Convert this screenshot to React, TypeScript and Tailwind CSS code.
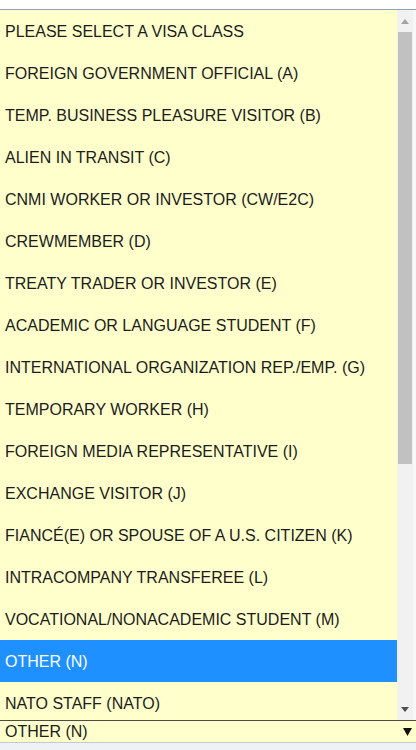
const options = [
  "PLEASE SELECT A VISA CLASS",
  "FOREIGN GOVERNMENT OFFICIAL (A)",
  "TEMP. BUSINESS PLEASURE VISITOR (B)",
  "ALIEN IN TRANSIT (C)",
  "CNMI WORKER OR INVESTOR (CW/E2C)",
  "CREWMEMBER (D)",
  "TREATY TRADER OR INVESTOR (E)",
  "ACADEMIC OR LANGUAGE STUDENT (F)",
  "INTERNATIONAL ORGANIZATION REP./EMP. (G)",
  "TEMPORARY WORKER (H)",
  "FOREIGN MEDIA REPRESENTATIVE (I)",
  "EXCHANGE VISITOR (J)",
  "FIANCÉ(E) OR SPOUSE OF A U.S. CITIZEN (K)",
  "INTRACOMPANY TRANSFEREE (L)",
  "VOCATIONAL/NONACADEMIC STUDENT (M)",
  "OTHER (N)",
  "NATO STAFF (NATO)",
];

const selected = "OTHER (N)";

export default function App() {
  return (
    <div className="h-[750px] w-[416px] overflow-hidden bg-white font-['Liberation_Sans',Arial,sans-serif] text-[16px] text-[#1c1c1c]">
      <div className="h-[9px] bg-white" />
      {/* open list */}
      <div className="flex h-[711px] border-t border-[#93a3bd]">
        <div className="w-[397px] overflow-hidden bg-[#ffffcc]">
          {options.map((opt) => (
            <div
              key={opt}
              className={`flex h-[42px] items-center whitespace-nowrap px-[5px] pt-[2px] ${
                opt === selected ? "bg-[#1e90ff] text-white" : ""
              }`}
            >
              {opt}
            </div>
          ))}
        </div>
        {/* scrollbar */}
        <div className="flex w-[16px] flex-col items-center bg-[#f1f1f1]">
          <div className="flex h-[22px] w-full items-center justify-center">
            <svg width="8" height="5" viewBox="0 0 8 5">
              <path d="M0 5 L4 0 L8 5 Z" fill="#a3a3a3" />
            </svg>
          </div>
          <div className="h-[432px] w-[14px] bg-[#c1c1c1]" />
          <div className="flex-1" />
          <div className="flex h-[22px] w-full items-center justify-center">
            <svg width="8" height="5" viewBox="0 0 8 5">
              <path d="M0 0 L8 0 L4 5 Z" fill="#505050" />
            </svg>
          </div>
        </div>
        <div className="w-[3px] bg-[#f7f7f7]" />
      </div>
      {/* select box */}
      <div className="flex h-[23px] items-center justify-between border-t border-b border-t-[#4d4d4d] border-b-[#c9c9c9] bg-[#ffffcc] pl-[5px] pr-[4px] pt-px">
        <span>{selected}</span>
        <svg width="9" height="8" viewBox="0 0 9 8">
          <path d="M0 0 L9 0 L4.5 8 Z" fill="#111" />
        </svg>
      </div>
      <div className="h-[8px] bg-[#eef1f6]" />
    </div>
  );
}
